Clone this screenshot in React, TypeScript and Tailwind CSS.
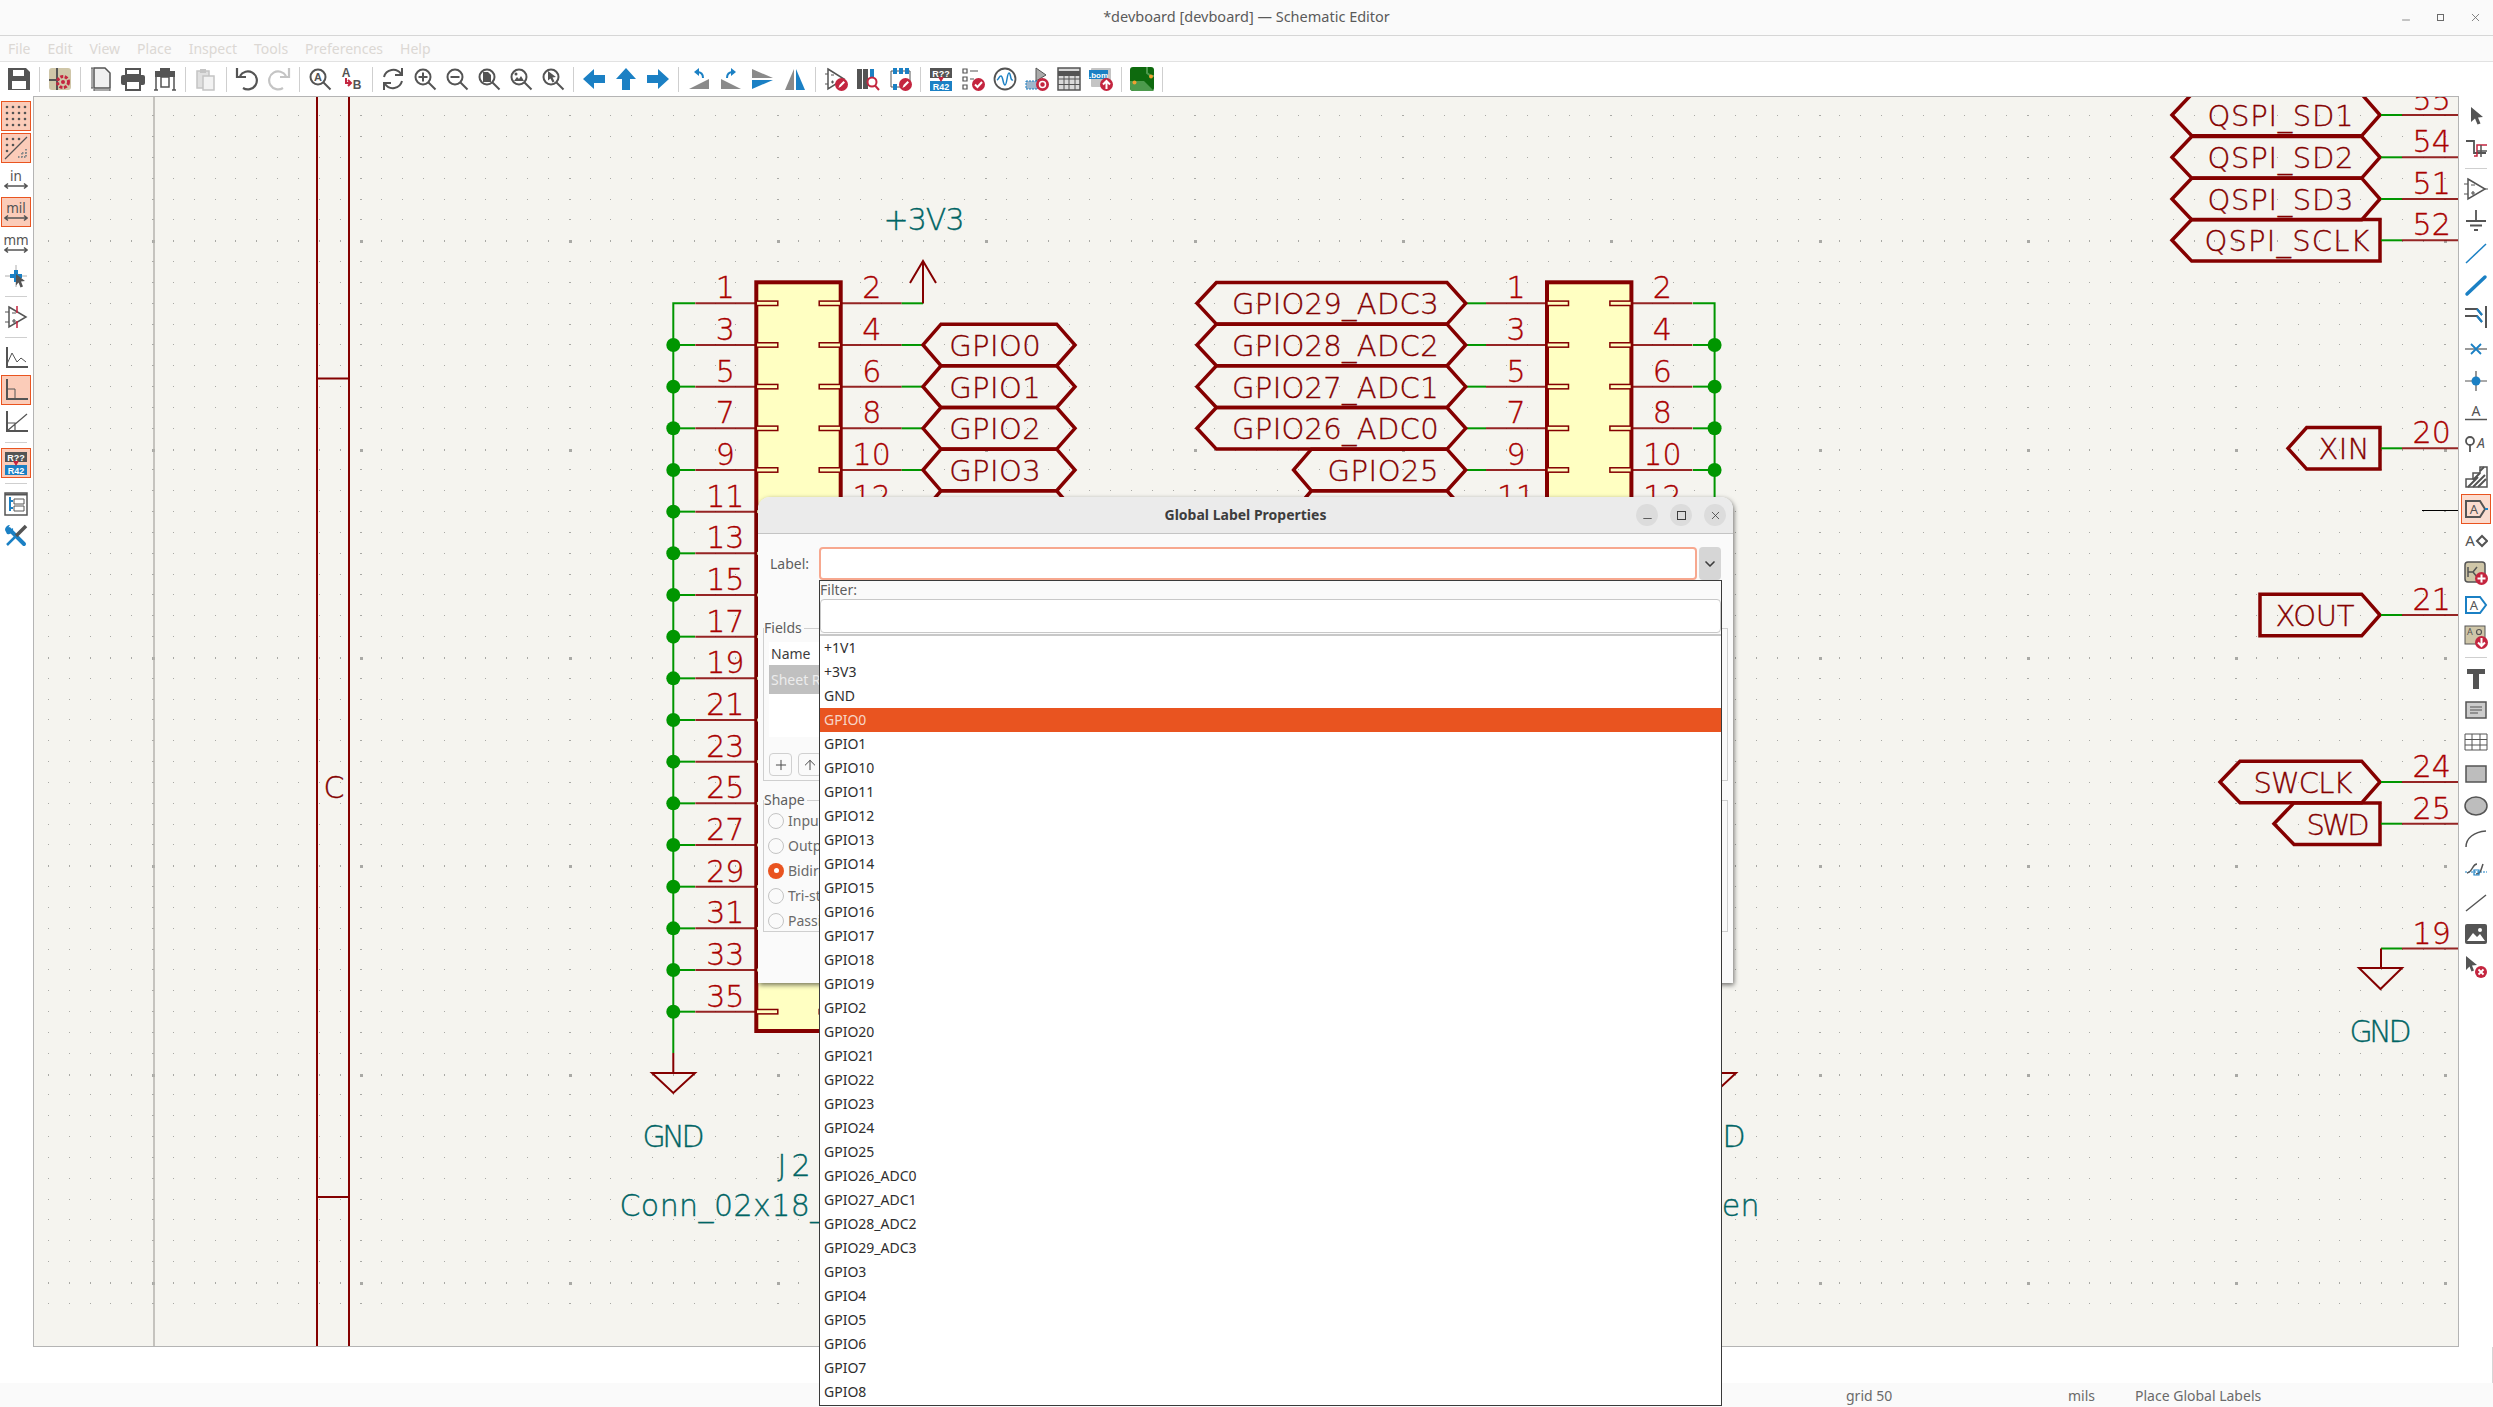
import React from "react";
import { X, Minus, ChevronDown, Plus, ArrowUp } from "lucide-react";

const D = "#545454";
const B = "#1b80c4";
const R = "#c4253f";
const L = "#c4c4c4";
const TAN = "#cfc6a8";
const DARKRED = "#840000";
const PINRED = "#a90000";
const TEAL = "#006464";
const GREEN = "#009600";
const PITCH = 41.67;

const Ic = ({ children }: { children: React.ReactNode }) => (
  <svg viewBox="0 0 24 24" className="h-6 w-6" fill="none" stroke={D} strokeWidth="2">
    {children}
  </svg>
);

const Badge = ({ plus, down, up, check, pen, ban }: { plus?: boolean; down?: boolean; up?: boolean; check?: boolean; pen?: boolean; ban?: boolean }) => (
  <g>
    <circle cx="17.5" cy="17.5" r="6.5" fill={R} stroke="none" />
    {plus && <path d="M17.5 13.5v8M13.5 17.5h8" stroke="#fff" strokeWidth="2" />}
    {down && <path d="M17.5 13v8M14 17.5l3.5 3.5 3.5-3.5" stroke="#fff" strokeWidth="2" />}
    {up && <path d="M17.5 22v-8M14 17.5l3.5-3.5 3.5 3.5" stroke="#fff" strokeWidth="2" />}
    {check && <path d="M14 17.5l2.5 2.5 4.5-5" stroke="#fff" strokeWidth="2" />}
    {pen && <path d="M14.5 21l1-3 4-4 1.5 1.5-4 4z" fill="#fff" stroke="none" />}
    {ban && <circle cx="17.5" cy="17.5" r="3" stroke="#fff" strokeWidth="1.5" />}
  </g>
);

const Mag = ({ children }: { children?: React.ReactNode }) => (
  <Ic>
    <circle cx="10" cy="10" r="7.5" />
    <path d="M15.5 15.5l7 7" />
    {children}
  </Ic>
);

const GlyphText = ({ x, y, size, fill, children }: { x: number; y: number; size: number; fill: string; children: React.ReactNode }) => (
  <text x={x} y={y} fontSize={size} fill={fill} stroke="none" textAnchor="middle" fontWeight="700" fontFamily="'Liberation Sans', sans-serif">
    {children}
  </text>
);

const topIcons: Record<string, React.ReactNode> = {
  save: (
    <Ic>
      <path d="M1 1h18l4 4v18H1z" fill={D} stroke="none" />
      <path d="M6 3h11v6H6z" fill="#fff" stroke="none" />
      <path d="M5 14h14v8H5z" fill="#fff" stroke="none" />
    </Ic>
  ),
  setup: (
    <Ic>
      <rect x="1" y="1" width="22" height="22" rx="3" fill={TAN} stroke="none" />
      <path d="M9 1v22M1 13h8" stroke={D} strokeWidth="2" />
      <circle cx="15" cy="15" r="5.5" fill="none" stroke={R} strokeWidth="3" strokeDasharray="3 1.5" />
      <circle cx="15" cy="15" r="2" fill={R} stroke="none" />
    </Ic>
  ),
  page: (
    <Ic>
      <path d="M5 1h11l5 5v15H5z" fill="#f0f0f0" stroke={D} strokeWidth="1.5" />
      <path d="M2 1h2M3 1v20M2 21h2M5 23h16M5 22v2M21 22v2" strokeWidth="1" />
    </Ic>
  ),
  print: (
    <Ic>
      <path d="M5 2h14v6H5z" fill="none" />
      <rect x="0" y="8" width="24" height="10" rx="2" fill={D} stroke="none" />
      <path d="M5 14h14v9H5z" fill="#fff" />
    </Ic>
  ),
  plot: (
    <Ic>
      <path d="M2 4h20v6H2z" fill={D} stroke="none" />
      <path d="M7 1h10v3H7z" fill={D} stroke="none" />
      <path d="M3 10v13M21 10v13M1 23h4M19 23h4" strokeWidth="1.5" />
      <path d="M8 10h8v10H8z" fill="#fff" strokeWidth="1.5" />
    </Ic>
  ),
  paste: (
    <Ic>
      <path d="M3 4h12v17H3z" fill="#e0e0e0" stroke={L} strokeWidth="1.5" />
      <path d="M6 2h6v4H6z" fill={L} stroke="none" />
      <path d="M9 9h11v14H9z" fill="#f2f2f2" stroke={L} strokeWidth="1.5" />
    </Ic>
  ),
  undo: (
    <Ic>
      <path d="M5 9a9 9 0 1 1 3 12" strokeWidth="2.2" />
      <path d="M2 1v9h9" strokeWidth="2.2" fill="none" />
    </Ic>
  ),
  redo: (
    <Ic>
      <path d="M19 9a9 9 0 1 0-3 12" strokeWidth="2.2" stroke={L} />
      <path d="M22 1v9h-9" strokeWidth="2.2" stroke={L} />
    </Ic>
  ),
  search: (
    <Mag>
      <GlyphText x={10} y={14} size={11} fill={D}>A</GlyphText>
    </Mag>
  ),
  replace: (
    <Ic>
      <GlyphText x={6} y={10} size={12} fill={D}>A</GlyphText>
      <GlyphText x={17} y={22} size={12} fill={D}>B</GlyphText>
      <path d="M6 11v5h4M8 13l3 3-3 3" stroke={R} />
    </Ic>
  ),
  refresh: (
    <Ic>
      <path d="M3 10a9.5 9.5 0 0 1 17-3M21 14a9.5 9.5 0 0 1-17 3" />
      <path d="M21 1v7h-7M3 23v-7h7" />
    </Ic>
  ),
  zoomin: (
    <Mag>
      <path d="M10 5.5v9M5.5 10h9" />
    </Mag>
  ),
  zoomout: (
    <Mag>
      <path d="M5.5 10h9" />
    </Mag>
  ),
  fit: (
    <Mag>
      <path d="M6 5h5l3 3v7H6z" fill={D} stroke="none" />
    </Mag>
  ),
  fitobj: (
    <Mag>
      <path d="M5 14l3-4 2 2 2-3 3 5z" fill={D} stroke="none" />
      <circle cx="7" cy="7" r="1.5" fill={D} stroke="none" />
    </Mag>
  ),
  fitsel: (
    <Mag>
      <path d="M7 4l8 6-3.5.5 2 4-2 1-2-4L7 13.5z" fill={D} stroke="none" />
    </Mag>
  ),
  left: (
    <Ic>
      <path d="M1 12L12 2v6h11v8H12v6z" fill={B} stroke="none" />
    </Ic>
  ),
  up: (
    <Ic>
      <path d="M12 1l10 11h-6v11H8V12H2z" fill={B} stroke="none" />
    </Ic>
  ),
  right: (
    <Ic>
      <path d="M23 12L12 2v6H1v8h11v6z" fill={B} stroke="none" />
    </Ic>
  ),
  rotl: (
    <Ic>
      <path d="M2 22L22 12v10z" fill="#8a8a8a" stroke="none" />
      <path d="M16 11c0-4-2-6-6-6" stroke={B} />
      <path d="M12 1L7 5l5 4z" fill={B} stroke="none" />
    </Ic>
  ),
  rotr: (
    <Ic>
      <path d="M22 22L2 12v10z" fill="#8a8a8a" stroke="none" />
      <path d="M8 11c0-4 2-6 6-6" stroke={B} />
      <path d="M12 1l5 4-5 4z" fill={B} stroke="none" />
    </Ic>
  ),
  mirh: (
    <Ic>
      <path d="M1 2l21 9H1z" fill="#8a8a8a" stroke="none" />
      <path d="M1 22l21-9H1z" fill={B} stroke="none" />
    </Ic>
  ),
  mirv: (
    <Ic>
      <path d="M11 2L2 23h9z" fill="#8a8a8a" stroke="none" />
      <path d="M13 2l9 21h-9z" fill={B} stroke="none" />
    </Ic>
  ),
  symed: (
    <Ic>
      <path d="M4 2l16 10L4 22z" strokeWidth="1.5" />
      <path d="M1 7h3M1 17h3M7 8h3M7 15h3M8.5 13.5v3" strokeWidth="1.2" />
      <Badge pen />
    </Ic>
  ),
  libbrowse: (
    <Ic>
      <rect x="1" y="2" width="5" height="20" fill={D} stroke="none" />
      <rect x="7" y="2" width="5" height="20" fill={D} stroke="none" />
      <path d="M14 2h4v8h-4z" fill={B} stroke="none" />
      <circle cx="16" cy="15" r="4.5" stroke={R} fill="#fff" />
      <path d="M19 18.5l4 4.5" stroke={R} />
    </Ic>
  ),
  fped: (
    <Ic>
      <path d="M3 4h19v16H3z" strokeWidth="1" />
      <path d="M5 1h4v6H5zM11 1h4v6h-4zM17 1h4v6h-4zM5 17h4v6H5z" fill={B} stroke="none" />
      <Badge pen />
    </Ic>
  ),
  annotate: (
    <Ic>
      <rect x="1" y="1" width="22" height="10" fill={D} stroke="none" />
      <GlyphText x={12} y={9.5} size={9} fill="#fff">R??</GlyphText>
      <rect x="1" y="14" width="22" height="10" fill={B} stroke="none" />
      <GlyphText x={12} y={22.5} size={9} fill="#fff">R42</GlyphText>
      <path d="M9 10h6l-3 5z" fill={R} stroke="none" />
    </Ic>
  ),
  erc: (
    <Ic>
      <path d="M2 2h4v4H2zM2 10h4v4H2zM2 18h4v4H2z" strokeWidth="1.2" />
      <path d="M9 4h8M9 12h4" strokeWidth="1.2" />
      <Badge check />
    </Ic>
  ),
  sim: (
    <Ic>
      <circle cx="12" cy="12" r="10.5" strokeWidth="1.8" />
      <path d="M4 13c2-1 2-4 4-4s2 9 4 9 2-12 4-12 1 8 4 7" stroke={B} strokeWidth="1.5" />
    </Ic>
  ),
  assign: (
    <Ic>
      <path d="M11 1l10 7-10 6z" fill="#aaa" stroke={D} strokeWidth="1" />
      <rect x="1" y="14" width="12" height="8" fill="#9fb7cc" stroke={B} strokeWidth="1" strokeDasharray="2 1" />
      <Badge ban />
    </Ic>
  ),
  table: (
    <Ic>
      <rect x="1" y="1" width="22" height="22" fill="#d9d9d9" strokeWidth="1.5" />
      <path d="M1 6.5h22" strokeWidth="5" />
      <path d="M1 12h22M1 17.5h22M7 6v17M12 6v17M18 6v17" strokeWidth="1" />
    </Ic>
  ),
  bom: (
    <Ic>
      <rect x="2" y="1" width="20" height="19" rx="1" fill={L} stroke="none" />
      <rect x="0" y="3" width="19" height="9" fill={B} stroke="none" />
      <GlyphText x={9.5} y={10.5} size={8} fill="#fff">.bom</GlyphText>
      <Badge up />
    </Ic>
  ),
  pcb: (
    <svg viewBox="0 0 24 24" className="h-6 w-6">
      <rect x="0" y="0" width="24" height="24" rx="3" fill="#0e6a0e" />
      <path d="M0 14h14l10 10H4a4 4 0 0 1-4-4z" fill="#4c9a4c" />
      <path d="M17 0v6l4 3h3" stroke="#4c9a4c" strokeWidth="2" fill="none" />
      <circle cx="4.5" cy="15.5" r="2" fill="#f0a030" />
      <circle cx="21" cy="9.5" r="2" fill="#f0a030" />
    </svg>
  ),
};

const topOrder = [
  "save", "|", "setup", "|", "page", "print", "plot", "|", "paste", "|", "undo", "redo", "|", "search", "replace", "|",
  "refresh", "zoomin", "zoomout", "fit", "fitobj", "fitsel", "|", "left", "up", "right", "|", "rotl", "rotr", "mirh", "mirv", "|",
  "symed", "libbrowse", "fped", "|", "annotate", "erc", "sim", "assign", "table", "bom", "|", "pcb", "|",
];

const unitLabel = (txt: string) => (
  <Ic>
    <text x="12" y="13" textAnchor="middle" fontSize="13.5" fill={D} stroke="none" fontFamily="'Noto Sans', sans-serif">{txt}</text>
    <path d="M1 18h22M4 15.5L1 18l3 2.5M20 15.5l3 2.5-3 2.5" strokeWidth="1.5" />
  </Ic>
);

const Dots = ({ n }: { n: number }) => (
  <>
    {Array.from({ length: n }, (_, i) => (
      <g key={i}>
        {[3, 9, 15, 21].map((x) => (
          <circle key={x} cx={x} cy={3 + i * 6} r="1.3" fill={D} stroke="none" />
        ))}
      </g>
    ))}
  </>
);

const leftItems: ({ icon: React.ReactNode; active?: boolean } | "|")[] = [
  { active: true, icon: <Ic><Dots n={4} /></Ic> },
  {
    active: true,
    icon: (
      <Ic>
        <circle cx="3" cy="3" r="1.3" fill={D} stroke="none" />
        <circle cx="9" cy="3" r="1.3" fill={D} stroke="none" />
        <circle cx="15" cy="3" r="1.3" fill={D} stroke="none" />
        <circle cx="3" cy="9" r="1.3" fill={D} stroke="none" />
        <circle cx="9" cy="9" r="1.3" fill={D} stroke="none" />
        <circle cx="3" cy="15" r="1.3" fill={D} stroke="none" />
        <path d="M1 23L23 1" strokeWidth="1.2" />
        <path d="M14 21h9M18 17h5M22 13v8M18 17v4" strokeWidth="2" strokeDasharray="1.5 1.5" stroke="#8a8a8a" />
      </Ic>
    ),
  },
  { icon: unitLabel("in") },
  { active: true, icon: unitLabel("mil") },
  { icon: unitLabel("mm") },
  {
    icon: (
      <Ic>
        <path d="M1 12h22M12 1v22" strokeWidth="0.8" stroke="#999" />
        <path d="M6 10h12v4H6zM10 6h4v12h-4z" fill={B} stroke="none" />
        <path d="M12 10l9 7-4 .5 2 5-2.5 1-2-5-2.5 3z" fill={D} stroke="none" />
      </Ic>
    ),
  },
  "|",
  {
    icon: (
      <Ic>
        <path d="M5 2l17 10L5 22z" strokeWidth="1.5" />
        <path d="M1 7h4M1 17h4M8 8h4M8 16h4M10 14v4" strokeWidth="1.2" />
        <path d="M13 1v7M13 16v7" stroke={R} strokeWidth="1.5" />
      </Ic>
    ),
  },
  "|",
  { icon: <Ic><path d="M3 1v20h21" /><path d="M3 18l5-11 5 9 4-4 5 4" stroke={D} strokeWidth="1" /></Ic> },
  { active: true, icon: <Ic><path d="M3 1v20h21" /><path d="M3 11h8v10" strokeWidth="1" /></Ic> },
  { icon: <Ic><path d="M3 1v20h21" /><path d="M3 21L23 4M3 13h8v8" strokeWidth="1.2" /></Ic> },
  "|",
  { active: true, icon: topIcons.annotate },
  "|",
  {
    icon: (
      <Ic>
        <rect x="1" y="1" width="22" height="22" strokeWidth="1.5" />
        <path d="M1 2.5h22" strokeWidth="2" />
        <path d="M6 5v14M6 9h3M6 16h3" stroke={B} strokeWidth="2" />
        <path d="M10 7h10v5H10zM10 14h10v5H10z" strokeWidth="1" />
      </Ic>
    ),
  },
  {
    icon: (
      <Ic>
        <path d="M5 5L20 20" stroke={B} strokeWidth="4" strokeLinecap="round" />
        <path d="M1 6a5 5 0 0 1 5-5l-2 3 2 2 3-2a5 5 0 0 1-6 6z" fill={B} stroke="none" />
        <path d="M22 2L12 12" stroke={D} strokeWidth="3.5" />
        <path d="M12 12L3 21" stroke={B} strokeWidth="2.5" />
      </Ic>
    ),
  },
];

const rightItems: ({ icon: React.ReactNode; active?: boolean } | "|")[] = [
  { icon: <Ic><path d="M7 3l12 10-5 .5 2.5 6-3 1-2.5-6L7 18z" fill={D} stroke="none" /></Ic> },
  {
    icon: (
      <Ic>
        <path d="M2 5h8v12h12" strokeWidth="1.8" />
        <path d="M10 20h3V9h10" stroke={R} strokeWidth="1.5" />
        <path d="M17 9v12M13 15h10" strokeWidth="1.5" />
      </Ic>
    ),
  },
  "|",
  {
    icon: (
      <Ic>
        <path d="M4 2l17 10L4 22z" strokeWidth="1.5" />
        <path d="M0 7h4M0 17h4M21 12h3M7 8h4M7 16h4M9 14v4" strokeWidth="1.2" />
      </Ic>
    ),
  },
  { icon: <Ic><path d="M12 1v11M2 12h20M6 16.5h12M10 21h4" strokeWidth="1.8" /></Ic> },
  { icon: <Ic><path d="M2 22L22 3" stroke={B} strokeWidth="1.5" /></Ic> },
  { icon: <Ic><path d="M3 21L21 4" stroke={B} strokeWidth="3.5" strokeLinecap="round" /></Ic> },
  {
    icon: (
      <Ic>
        <path d="M1 4h12l5 6M1 11h12l5 6M22 1v22" strokeWidth="2" />
        <path d="M13 4l5 6M13 11l5 6" stroke={B} strokeWidth="2" />
      </Ic>
    ),
  },
  { icon: <Ic><path d="M1 12h22" strokeWidth="1.2" /><path d="M7 7l10 10M17 7L7 17" stroke={B} strokeWidth="1.8" /></Ic> },
  { icon: <Ic><path d="M1 12h22M12 2v20" strokeWidth="1.2" /><circle cx="12" cy="12" r="4.5" fill={B} stroke="none" /></Ic> },
  { icon: <Ic><text x="12" y="15" textAnchor="middle" fontSize="14" fill={D} stroke="none" fontFamily="'Noto Sans', sans-serif">A</text><path d="M1 18.5h22" strokeWidth="1.5" /></Ic> },
  {
    icon: (
      <Ic>
        <circle cx="6" cy="8" r="4" strokeWidth="1.8" />
        <path d="M6 12v7" strokeWidth="1.8" />
        <text x="17" y="15" textAnchor="middle" fontSize="14" fontStyle="italic" fill={D} stroke="none" fontFamily="'Noto Sans', sans-serif">A</text>
      </Ic>
    ),
  },
  {
    icon: (
      <Ic>
        <path d="M2 22v-8h7V8h7V2h7v20z" fill="#fff" stroke={D} strokeWidth="1.5" />
        <path d="M4 22l10-10M9 22l12-12M14 22l8-8M9 15l7-7M16 6l4-4" stroke={D} strokeWidth="2" />
      </Ic>
    ),
  },
  {
    active: true,
    icon: (
      <Ic>
        <path d="M2 4h14l5 8-5 8H2z" strokeWidth="2" />
        <path d="M21 12h3" stroke={B} />
        <text x="10" y="17" textAnchor="middle" fontSize="13" fill={D} stroke="none" fontFamily="'Noto Sans', sans-serif">A</text>
      </Ic>
    ),
  },
  {
    icon: (
      <Ic>
        <text x="6" y="17" textAnchor="middle" fontSize="15" fill={D} stroke="none" fontFamily="'Noto Sans', sans-serif">A</text>
        <path d="M13 12l5-5 5 5-5 5z" strokeWidth="2" />
      </Ic>
    ),
  },
  {
    icon: (
      <Ic>
        <rect x="1" y="1" width="20" height="20" rx="3" fill={TAN} strokeWidth="1.5" />
        <path d="M4 6v10M4 11h5l4-5M9 11l4 5" strokeWidth="1.5" />
        <Badge plus />
      </Ic>
    ),
  },
  {
    icon: (
      <Ic>
        <path d="M2 4h14l6 8-6 8H2z" stroke={B} strokeWidth="2" />
        <text x="10" y="17" textAnchor="middle" fontSize="13" fill={D} stroke="none" fontFamily="'Noto Sans', sans-serif">A</text>
      </Ic>
    ),
  },
  {
    icon: (
      <Ic>
        <rect x="1" y="1" width="20" height="18" fill={TAN} strokeWidth="1" />
        <text x="6" y="10" textAnchor="middle" fontSize="9" fill={D} stroke="none" fontFamily="'Noto Sans', sans-serif">A</text>
        <circle cx="15" cy="7" r="2.5" strokeWidth="1.2" />
        <Badge down />
      </Ic>
    ),
  },
  "|",
  { icon: <Ic><path d="M3 3h18v5h-6v15H9V8H3z" fill={D} stroke="none" /></Ic> },
  { icon: <Ic><rect x="2" y="4" width="20" height="16" fill="#ccc" strokeWidth="1.5" /><path d="M6 9h12M6 12h12M6 15h8" strokeWidth="1" /></Ic> },
  { icon: <Ic><path d="M1 4h22v16H1zM1 9.5h22M1 15h22M8 4v16M16 4v16" strokeWidth="1" /></Ic> },
  { icon: <Ic><rect x="2" y="4" width="20" height="16" fill="#bdbdbd" strokeWidth="1.5" /></Ic> },
  { icon: <Ic><ellipse cx="12" cy="12" rx="11" ry="9" fill="#bdbdbd" strokeWidth="1.5" /></Ic> },
  { icon: <Ic><path d="M2 21c0-9 8-15 20-16" strokeWidth="1.5" /></Ic> },
  {
    icon: (
      <Ic>
        <path d="M1 14h22" stroke={B} strokeWidth="1.2" strokeDasharray="2 1" />
        <path d="M3 15c6-1 5-9 10-9M12 16c5 0 5-5 7-10" strokeWidth="1.5" />
        <path d="M10 12h5v5h-5z" fill="none" stroke={B} strokeWidth="1.2" />
      </Ic>
    ),
  },
  { icon: <Ic><path d="M2 21L22 5" strokeWidth="1.5" /></Ic> },
  {
    icon: (
      <Ic>
        <rect x="1" y="2" width="22" height="20" rx="2" fill={D} stroke="none" />
        <path d="M3 19l6-8 4 4 3-3 5 7z" fill="#fff" stroke="none" />
        <circle cx="16" cy="8" r="2" fill="#fff" stroke="none" />
      </Ic>
    ),
  },
  {
    icon: (
      <Ic>
        <path d="M2 2l11 9-5 .5 2 5-2.5 1-2-5L2 16z" fill={D} stroke="none" />
        <circle cx="17" cy="18" r="6" fill={R} stroke="none" />
        <path d="M14.5 15.5l5 5M19.5 15.5l-5 5" stroke="#fff" strokeWidth="1.8" />
      </Ic>
    ),
  },
];

const SideBar = ({ items, activeBg, className }: { items: typeof leftItems; activeBg: string; className: string }) => (
  <div className={`flex shrink-0 flex-col pt-1 ${className}`}>
    {items.map((it, i) =>
      it === "|" ? (
        <div key={i} className="flex h-[9px] w-8 items-center justify-center">
          <div className="h-px w-[22px] bg-[#cfcfcf]" />
        </div>
      ) : (
        <div key={i} className="flex h-8 w-8 items-center justify-center">
          <div className={`flex h-[30px] w-[30px] items-center justify-center ${it.active ? `border border-[#e95420] ${activeBg}` : ""}`}>
            {it.icon}
          </div>
        </div>
      ),
    )}
  </div>
);

/* schematic drawing, all coordinates in page pixels */

const gridPath = (() => {
  const x0 = 777 - 35 * 20.833;
  const y0 = 240.3 - 10 * 20.833;
  let d = "";
  for (let r = 0; r < 62; r++) {
    for (let c = 0; c < 118; c++) {
      const x = Math.round(x0 + c * 20.833);
      const y = Math.round(y0 + r * 20.833);
      const mc = c % 10 === 5;
      const mr = r % 10 === 0;
      const w = mc ? (mr ? 3 : 2) : 1;
      const h = mr ? (mc ? 3 : 2) : 1;
      d += `M${x} ${y}h${w}v${h}h-${w}z`;
    }
  }
  return d;
})();

const SchText = ({ x, y, w, fill, size = 30, anchor = "start", children }: { x: number; y: number; w?: number; fill: string; size?: number; anchor?: "start" | "middle" | "end"; children: React.ReactNode }) => (
  <text
    x={w ? x - 1.5 : x}
    y={y}
    textLength={w ? w + 3 : undefined}
    lengthAdjust={w ? "spacing" : undefined}
    fill={fill}
    stroke={fill}
    strokeWidth="0.35"
    fontSize={size}
    textAnchor={anchor}
  >
    {children}
  </text>
);

const Label = ({ y, l, lc, rc, r, text, tx, tw }: { y: number; l: number; lc: number; rc: number; r: number; text: string; tx: number; tw: number }) => (
  <g>
    <path d={`M${l} ${y}L${lc} ${y - 20.8}L${rc} ${y - 20.8}L${r} ${y}L${rc} ${y + 20.8}L${lc} ${y + 20.8}Z`} fill="none" stroke={DARKRED} strokeWidth="3.5" />
    <SchText x={tx} y={y + 11} w={tw} fill={DARKRED} size={29}>{text}</SchText>
  </g>
);

const Connector = ({ x, top, numOffsetL, numOffsetR }: { x: number; top: number; numOffsetL: number; numOffsetR: number }) => {
  const right = x + 84.4;
  return (
    <g>
      <rect x={x} y={top} width={84.4} height={748.7} fill="#ffffc2" stroke={DARKRED} strokeWidth="4" />
      {Array.from({ length: 18 }, (_, i) => {
        const y = 303.3 + i * PITCH;
        return (
          <g key={i}>
            <rect x={x} y={y - 2.2} width={21.5} height={4.4} fill="#ffffc2" stroke={DARKRED} strokeWidth="1.5" />
            <rect x={right - 21.5} y={y - 2.2} width={21.5} height={4.4} fill="#ffffc2" stroke={DARKRED} strokeWidth="1.5" />
            <path d={`M${x - 61} ${y}H${x}M${right} ${y}H${right + 61}`} stroke={DARKRED} strokeWidth="2" strokeOpacity="0.85" />
            <SchText x={x + numOffsetL} y={y - 5} fill={PINRED} anchor="middle">{i * 2 + 1}</SchText>
            <SchText x={right + numOffsetR} y={y - 5} fill={PINRED} anchor="middle">{i * 2 + 2}</SchText>
          </g>
        );
      })}
    </g>
  );
};

const PinRow = ({ y, num }: { y: number; num: number }) => (
  <g>
    <path d={`M2381 ${y}H2402`} stroke={GREEN} strokeWidth="2" />
    <path d={`M2402 ${y}H2460`} stroke={DARKRED} strokeWidth="2" strokeOpacity="0.85" />
    <SchText x={2431.7} y={y - 5} fill={PINRED} anchor="middle">{num}</SchText>
  </g>
);

const Schematic = () => {
  const rows = Array.from({ length: 18 }, (_, i) => 303.3 + i * PITCH);
  const left = ["GPIO29_ADC3", "GPIO28_ADC2", "GPIO27_ADC1", "GPIO26_ADC0"];
  return (
    <svg viewBox="34 97 2424 1249" className="block h-full w-full" fontFamily="'DejaVu Sans', sans-serif" fontWeight="200">
      <path d={gridPath} fill="#a9a9a5" shapeRendering="crispEdges" />

      {/* page frame */}
      <path d="M154 96V1348" stroke="#b4b3ae" strokeWidth="1.5" fill="none" />
      <path d="M317 96V1348M349 96V1348M317 378.5H349M317 1197H349" stroke={DARKRED} strokeWidth="2" fill="none" />
      <SchText x={334} y={798} fill={DARKRED} anchor="middle">C</SchText>

      {/* left connector */}
      <path d="M695 303.3H673.3V1053" stroke={GREEN} strokeWidth="2" fill="none" />
      {rows.slice(1).map((y) => (
        <g key={y}>
          <path d={`M673.3 ${y}H695`} stroke={GREEN} strokeWidth="2" />
          <circle cx={673.3} cy={y} r={7} fill={GREEN} />
        </g>
      ))}
      <Connector x={756.3} top={282.3} numOffsetL={-31} numOffsetR={31} />
      <path d="M673.3 1053V1073M652 1073H695L673.3 1093Z" stroke={DARKRED} strokeWidth="2" fill="none" />
      <SchText x={644} y={1146.5} w={59} fill={TEAL}>GND</SchText>
      <SchText x={779} y={1176} w={30} fill={TEAL}>J2</SchText>
      <SchText x={621} y={1216} w={357} fill={TEAL}>Conn_02x18_Odd_Even</SchText>

      {/* +3V3 */}
      <path d="M901.7 303.3H923" stroke={GREEN} strokeWidth="2" />
      <path d="M923 303.3V261M910 283L923 261L936 283" stroke={DARKRED} strokeWidth="2" fill="none" />
      <SchText x={885} y={230} w={78} fill={TEAL}>+3V3</SchText>

      {["GPIO0", "GPIO1", "GPIO2", "GPIO3", "GPIO4"].map((t, i) => (
        <g key={t}>
          <path d={`M901.7 ${rows[i + 1]}H923`} stroke={GREEN} strokeWidth="2" />
          <Label y={rows[i + 1]} l={923} lc={941} rc={1056.7} r={1075} text={t} tx={950.7} tw={88.5} />
        </g>
      ))}

      {/* right connector */}
      <path d="M1693 303.3H1714.6V1053" stroke={GREEN} strokeWidth="2" fill="none" />
      {rows.slice(1).map((y) => (
        <g key={y}>
          <path d={`M1693 ${y}H1714.6`} stroke={GREEN} strokeWidth="2" />
          <circle cx={1714.6} cy={y} r={7} fill={GREEN} />
        </g>
      ))}
      {rows.map((y) => (
        <path key={y} d={`M1465.7 ${y}H1486`} stroke={GREEN} strokeWidth="2" />
      ))}
      <Connector x={1547} top={282.3} numOffsetL={-31} numOffsetR={31} />
      {left.map((t, i) => (
        <Label key={t} y={rows[i]} l={1197} lc={1216.4} rc={1447} r={1465.7} text={t} tx={1233.6} tw={203.5} />
      ))}
      <Label y={rows[4]} l={1293.6} lc={1311.4} rc={1447} r={1465.7} text="GPIO25" tx={1329} tw={108} />
      <Label y={rows[5]} l={1293.6} lc={1311.4} rc={1447} r={1465.7} text="GPIO24" tx={1329} tw={108} />
      <path d="M1714.6 1053V1073M1693 1073H1736L1714.6 1093Z" stroke={DARKRED} strokeWidth="2" fill="none" />
      <SchText x={1685} y={1146.5} w={59} fill={TEAL}>GND</SchText>
      <SchText x={1402} y={1216} w={356} fill={TEAL}>Conn_02x18_Odd_Even</SchText>

      {/* right side pins */}
      <Label y={115} l={2172} lc={2191.7} rc={2361.7} r={2380} text="QSPI_SD1" tx={2209} tw={143} />
      <Label y={157.3} l={2172} lc={2191.7} rc={2361.7} r={2380} text="QSPI_SD2" tx={2209} tw={143} />
      <Label y={199} l={2172} lc={2191.7} rc={2361.7} r={2380} text="QSPI_SD3" tx={2209} tw={143} />
      <Label y={240.3} l={2172} lc={2191.7} rc={2380} r={2380} text="QSPI_SCLK" tx={2206} tw={162} />
      <PinRow y={115} num={55} />
      <PinRow y={157.3} num={54} />
      <PinRow y={199} num={51} />
      <PinRow y={240.3} num={52} />

      <Label y={448.3} l={2288} lc={2306.7} rc={2380} r={2380} text="XIN" tx={2320} tw={48} />
      <PinRow y={448.3} num={20} />
      <path d="M2422 510.5H2460" stroke="#000" strokeWidth="1" />
      <Label y={615} l={2260} lc={2260} rc={2361.7} r={2380} text="XOUT" tx={2277} tw={76} />
      <PinRow y={615} num={21} />
      <Label y={782} l={2220} lc={2240} rc={2361.7} r={2380} text="SWCLK" tx={2255} tw={96} />
      <PinRow y={782} num={24} />
      <Label y={823.7} l={2274} lc={2294} rc={2380} r={2380} text="SWD" tx={2308} tw={60} />
      <PinRow y={823.7} num={25} />
      <PinRow y={948.5} num={19} />
      <path d="M2381 948.5V968M2359 968H2402L2380.5 989Z" stroke={DARKRED} strokeWidth="2" fill="none" />
      <SchText x={2351} y={1042} w={59} fill={TEAL}>GND</SchText>
    </svg>
  );
};

/* dialog */

const netNames = [
  "+1V1", "+3V3", "GND", "GPIO0", "GPIO1", "GPIO10", "GPIO11", "GPIO12", "GPIO13", "GPIO14", "GPIO15", "GPIO16", "GPIO17", "GPIO18", "GPIO19",
  "GPIO2", "GPIO20", "GPIO21", "GPIO22", "GPIO23", "GPIO24", "GPIO25", "GPIO26_ADC0", "GPIO27_ADC1", "GPIO28_ADC2", "GPIO29_ADC3",
  "GPIO3", "GPIO4", "GPIO5", "GPIO6", "GPIO7", "GPIO8",
];

const shapes = [
  { name: "Input" },
  { name: "Output" },
  { name: "Bidirectional", on: true },
  { name: "Tri-state" },
  { name: "Passive" },
];

const WinButton = ({ children }: { children: React.ReactNode }) => (
  <div className="flex h-[22px] w-[22px] items-center justify-center rounded-full bg-[#dcdcdc] text-[#3d3d3d]">{children}</div>
);

const Dialog = () => (
  <div className="absolute left-[758px] top-[497px] flex h-[486px] w-[975px] flex-col rounded-t-[12px] bg-[#fafafa] shadow-[1px_2px_5px_rgba(0,0,0,0.55)]">
    <div className="relative flex h-[37px] shrink-0 items-center justify-center rounded-t-[12px] border-b border-[#c4c4c4] bg-[#ebebeb] pb-[2px]">
      <span className="text-[14px] font-bold text-[#3d3d3d]">Global Label Properties</span>
      <div className="absolute right-[7px] top-[7px] flex gap-3">
        <WinButton><Minus size={13} strokeWidth={1.5} className="translate-y-[3px]" /></WinButton>
        <WinButton><div className="h-[9px] w-[9px] border border-[#3d3d3d]" /></WinButton>
        <WinButton><X size={13} strokeWidth={1.5} /></WinButton>
      </div>
    </div>
    <div className="flex flex-col pl-[5px] pr-[5px]">
      <div className="mt-[13px] flex h-[33px] items-center">
        <span className="ml-[7px] w-[49px] pb-px text-[14px] text-[#5e5e5e]">Label:</span>
        <div className="h-[33px] w-[878px] rounded-[4px] border-2 border-[#f7a88f] bg-white" />
        <div className="ml-[2px] flex h-[33px] w-[22px] items-center justify-center rounded-[4px] bg-[#d6d6d6]">
          <ChevronDown size={16} strokeWidth={2.5} className="text-[#3d3d3d]" />
        </div>
      </div>
      <div className="relative mt-[48px] h-[153px] border border-[#cfcfcf] px-[5px] pt-[13px]">
        <span className="absolute -top-[10px] left-0 bg-[#fafafa] pr-[2px] text-[14px] leading-[18px] text-[#5e5e5e]">Fields</span>
        <div className="h-[95px] bg-white">
          <div className="flex h-[23px] items-center pl-[2px] text-[14px] text-[#3d3d3d]">Name</div>
          <div className="flex h-[29px] items-center bg-[#c0c0c0] pl-[2px] text-[14px] text-[#ececec]">Sheet References</div>
        </div>
        <div className="mt-[16px] flex gap-[6px]">
          <div className="flex h-[23px] w-[23px] items-center justify-center rounded-[4px] border border-[#d0d0d0] text-[#4a4a4a]"><Plus size={16} strokeWidth={1.5} /></div>
          <div className="flex h-[23px] w-[24px] items-center justify-center rounded-[4px] border border-[#d0d0d0] text-[#4a4a4a]"><ArrowUp size={16} strokeWidth={1.5} /></div>
        </div>
      </div>
      <div className="relative mt-[19px] h-[132px] border border-[#cfcfcf] px-[4px] pt-[7px]">
        <span className="absolute -top-[10px] left-0 bg-[#fafafa] pr-[2px] text-[14px] leading-[18px] text-[#5e5e5e]">Shape</span>
        {shapes.map((s) => (
          <div key={s.name} className="flex h-[25px] items-center gap-[4px]">
            {s.on ? (
              <div className="flex h-4 w-4 items-center justify-center rounded-full bg-[#e95420]">
                <div className="h-[5px] w-[5px] rounded-full bg-white" />
              </div>
            ) : (
              <div className="h-4 w-4 rounded-full border border-[#c4c4c4] bg-[#fafafa]" />
            )}
            <span className="text-[14px] text-[#6a6a6a]">{s.name}</span>
          </div>
        ))}
      </div>
    </div>
  </div>
);

const DropList = () => (
  <div className="absolute left-[819px] top-[580px] flex h-[826px] w-[903px] flex-col border border-[#3a3a3a] bg-white">
    <div className="h-[55px] shrink-0 border-b-2 border-[#c8c8c8] bg-[#fafafa]">
      <div className="h-[18px] text-[14px] leading-[17px] text-[#5e5e5e]">Filter:</div>
      <div className="h-[34px] rounded-[4px] border border-[#c8c8c8] bg-white" />
    </div>
    {netNames.map((n) => (
      <div
        key={n}
        className={`flex h-6 shrink-0 items-center pb-[2px] pl-[4px] text-[14px] ${n === "GPIO0" ? "bg-[#e95420] text-[#f7d6c8]" : "text-[#2e2e2e]"}`}
      >
        {n}
      </div>
    ))}
  </div>
);

const menus = ["File", "Edit", "View", "Place", "Inspect", "Tools", "Preferences", "Help"];

export default function App() {
  return (
    <div className="relative flex h-[1407px] w-[2493px] flex-col overflow-hidden bg-white font-['Noto_Sans',sans-serif]">
      {/* title bar */}
      <div className="relative flex h-[36px] shrink-0 items-center justify-center border-b border-[#d6d6d6] bg-[#fafafa] pb-[2px]">
        <span className="text-[14.5px] text-[#5a5a5a]">*devboard [devboard] — Schematic Editor</span>
        <div className="absolute right-0 top-0 flex h-full items-center text-[#6a6a6a]">
          <div className="flex w-[35px] justify-center"><Minus size={12} strokeWidth={1.5} className="translate-y-[2px]" /></div>
          <div className="flex w-[35px] justify-center"><div className="h-[7px] w-[7px] border border-[#6a6a6a]" /></div>
          <div className="flex w-[35px] justify-center"><X size={13} strokeWidth={1.5} /></div>
        </div>
      </div>
      {/* menu bar */}
      <div className="flex h-[26px] shrink-0 items-center gap-[17px] border-b border-[#e2e2e2] bg-[#fafafa] pl-[8px] text-[14px] text-[#dcd8d4]">
        {menus.map((m) => (
          <span key={m}>{m}</span>
        ))}
      </div>
      {/* top toolbar */}
      <div className="flex h-[34px] shrink-0 items-center pl-[3px]">
        {topOrder.map((k, i) =>
          k === "|" ? (
            <div key={i} className="flex h-full w-[9px] items-center justify-center">
              <div className="h-[25px] w-px bg-[#cfcfcf]" />
            </div>
          ) : (
            <div key={i} className="flex h-8 w-8 items-center justify-center">
              {topIcons[k]}
            </div>
          ),
        )}
      </div>
      {/* main area */}
      <div className="flex min-h-0 flex-1">
        <SideBar items={leftItems} activeBg="bg-[#fbccb9]" className="w-[33px]" />
        <div className="min-w-0 flex-1 border border-[#b4b4b4] bg-[#f5f4ef]">
          <Schematic />
        </div>
        <SideBar items={rightItems} activeBg="bg-[#fbdccf]" className="w-[34px] pl-px" />
      </div>
      {/* message panel */}
      <div className="h-[36px] shrink-0 border-r border-[#d6d6d6] bg-white" />
      {/* status bar */}
      <div className="relative flex h-[24px] shrink-0 items-center bg-[#fafafa] text-[14px] text-[#6a6a6a]">
        <span className="ml-[1846px] w-[222px]">grid 50</span>
        <span className="w-[67px]">mils</span>
        <span>Place Global Labels</span>
      </div>
      <Dialog />
      <DropList />
    </div>
  );
}
